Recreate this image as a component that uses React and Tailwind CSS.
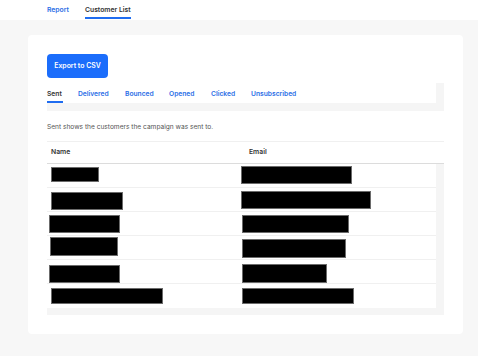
import React from "react";

const rows = [
  { n: [4, 48, 3, 15], e: [0, 111, 2, 18] },
  { n: [4, 72, 4, 18], e: [0, 130, 3, 18] },
  { n: [2, 71, 3, 18], e: [1, 107, 3, 18] },
  { n: [3, 68, 1, 19], e: [1, 104, 3, 19] },
  { n: [2, 71, 5, 18], e: [1, 85, 4, 19] },
  { n: [4, 112, 4, 16], e: [1, 112, 4, 16] },
];

function Box({ v }) {
  const [ml, w, mt, h] = v;
  return (
    <div
      className="bg-black border border-[#6b6b6b]"
      style={{ marginLeft: ml, width: w, marginTop: mt, height: h }}
    />
  );
}

export default function App() {
  return (
    <div
      className="w-[478px] h-[356px] bg-[#f7f7f7] overflow-hidden"
      style={{ fontFamily: "Inter, 'Noto Sans', sans-serif" }}
    >
      <div className="h-[20px] bg-white flex items-start pl-[47px] gap-[16px]">
        <div className="h-[20px] flex items-center pt-[1px] text-[6.8px] font-semibold text-[#2a6ee6]">
          Report
        </div>
        <div className="h-[20px] flex flex-col justify-center pt-[1px] relative text-[6.8px] font-semibold text-[#333]">
          <span>Customer List</span>
          <div className="absolute left-0 right-0 bottom-[1px] h-[2px] bg-[#1f6cf0]" />
        </div>
      </div>
      <div className="ml-[28px] mt-[15px] w-[435px] h-[299px] bg-white rounded-[4px] pl-[19px] pt-[19px]">
        <button className="w-[61px] h-[24px] rounded-[4px] bg-[#1b6dfb] text-white text-[6.9px] font-semibold flex items-center justify-center">
          Export to CSV
        </button>
        <div className="mt-[5px] w-[397px] bg-[#f5f5f5] pr-[8px] pb-[8px]">
          <div className="h-[20px] bg-white flex items-stretch text-[6.7px] font-semibold text-[#2a6ee6]">
            <div className="relative flex items-center pt-[2px] text-[#333] w-[31px]">
              <span>Sent</span>
              <div className="absolute left-0 w-[16px] bottom-[0px] h-[2px] bg-[#1f6cf0]" />
            </div>
            <div className="flex items-center pt-[2px] w-[47px]">Delivered</div>
            <div className="flex items-center pt-[2px] w-[44px]">Bounced</div>
            <div className="flex items-center pt-[2px] w-[42px]">Opened</div>
            <div className="flex items-center pt-[2px] w-[40px]">Clicked</div>
            <div className="flex items-center pt-[2px]">Unsubscribed</div>
          </div>
        </div>
        <div className="mt-[10px] text-[6.6px] text-[#555] leading-[12px]">
          Sent shows the customers the campaign was sent to.
        </div>
        <div className="mt-[8px] w-[397px]">
          <div className="h-[23px] border-t border-[#f0f0f0] border-b border-b-[#dcdcdc] flex items-center text-[6.8px] font-semibold text-[#333]">
            <div className="w-[202px] pl-[4px]">Name</div>
            <div>Email</div>
          </div>
          <div className="bg-[#f5f5f5] pr-[8px] pb-[7px]">
            <div className="bg-white">
              {rows.map((r, i) => (
                <div
                  key={i}
                  className={
                    "h-[24px] flex items-start " +
                    (i < rows.length - 1 ? "border-b border-[#f0f0f0]" : "")
                  }
                >
                  <div className="w-[194px] flex items-start">
                    <Box v={r.n} />
                  </div>
                  <div className="flex items-start">
                    <Box v={r.e} />
                  </div>
                </div>
              ))}
            </div>
          </div>
        </div>
      </div>
    </div>
  );
}
